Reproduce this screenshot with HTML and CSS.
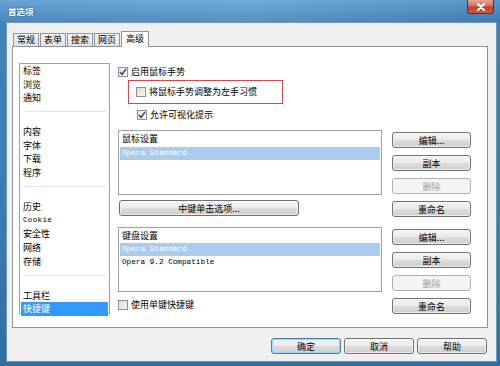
FILE: index.html
```html
<!DOCTYPE html>
<html lang="zh">
<head>
<meta charset="utf-8">
<title>首选项</title>
<link rel="stylesheet" href="styles.css">
</head>
<body>
<div class="window">
  <div class="titlebar">
    <span class="title">首选项</span>
    <span class="close"><svg width="10" height="8" viewBox="0 0 10 8"><path d="M2 1 L8 7 M8 1 L2 7" stroke="#fff" stroke-width="2" stroke-linecap="round"/></svg></span>
  </div>
  <div class="client">
    <div class="tabs">
      <div class="tab">常规</div>
      <div class="tab">表单</div>
      <div class="tab">搜索</div>
      <div class="tab">网页</div>
      <div class="tab active">高级</div>
    </div>
    <div class="panel">
      <ul class="nav">
        <li>标签</li>
        <li>浏览</li>
        <li>通知</li>
        <li class="sep"></li>
        <li>内容</li>
        <li>字体</li>
        <li>下载</li>
        <li>程序</li>
        <li class="sep"></li>
        <li>历史</li>
        <li class="mono">Cookie</li>
        <li>安全性</li>
        <li>网络</li>
        <li>存储</li>
        <li class="sep"></li>
        <li>工具栏</li>
        <li class="selected">快捷键</li>
      </ul>
      <div class="main">
        <label class="cb-row">
          <span class="cb checked"><svg width="8" height="8" viewBox="0 0 8 8"><path d="M1 4 L3 6.5 L7 1" fill="none" stroke="#2f4f8a" stroke-width="1.6"/></svg></span>
          <span>启用鼠标手势</span>
        </label>
        <div class="highlight">
          <label class="cb-row">
            <span class="cb"></span>
            <span>将鼠标手势调整为左手习惯</span>
          </label>
        </div>
        <label class="cb-row indent">
          <span class="cb checked"><svg width="8" height="8" viewBox="0 0 8 8"><path d="M1 4 L3 6.5 L7 1" fill="none" stroke="#2f4f8a" stroke-width="1.6"/></svg></span>
          <span>允许可视化提示</span>
        </label>

        <div class="group mouse">
          <div class="left">
            <div class="listbox">
              <div class="lb-head">鼠标设置</div>
              <div class="lb-row sel">Opera Standard</div>
            </div>
            <button class="btn wide">中键单击选项...</button>
          </div>
          <div class="btns">
            <button class="btn">编辑...</button>
            <button class="btn">副本</button>
            <button class="btn" disabled>删除</button>
            <button class="btn">重命名</button>
          </div>
        </div>

        <div class="group keys">
          <div class="left">
            <div class="listbox">
              <div class="lb-head">键盘设置</div>
              <div class="lb-row sel">Opera Standard</div>
              <div class="lb-row">Opera 9.2 Compatible</div>
            </div>
            <label class="cb-row single">
              <span class="cb"></span>
              <span>使用单键快捷键</span>
            </label>
          </div>
          <div class="btns">
            <button class="btn">编辑...</button>
            <button class="btn">副本</button>
            <button class="btn" disabled>删除</button>
            <button class="btn">重命名</button>
          </div>
        </div>
      </div>
    </div>
    <div class="footer">
      <button class="btn foot default">确定</button>
      <button class="btn foot">取消</button>
      <button class="btn foot">帮助</button>
    </div>
  </div>
</div>
</body>
</html>
```

FILE: styles.css
```css
* { box-sizing: border-box; }
html, body { margin: 0; padding: 0; }
body {
  width: 500px;
  height: 366px;
  overflow: hidden;
  font-family: "Noto Sans CJK SC", "Liberation Sans", sans-serif;
  font-size: 9px;
  color: #000;
}
.window {
  width: 500px;
  height: 366px;
  display: flex;
  flex-direction: column;
  background: linear-gradient(180deg, #5f9fd2 0px, #3f83bb 22px, #3a7db4 200px, #2f6fa4 366px);
}
.titlebar {
  height: 22px;
  display: flex;
  justify-content: space-between;
  align-items: flex-start;
  padding-left: 8px;
  background: linear-gradient(90deg, rgba(255,255,255,0.05), rgba(255,255,255,0.12) 50%, rgba(0,0,0,0.05));
}
.title {
  margin-top: 6px;
  font-size: 8.5px;
  font-weight: bold;
  color: #fff;
  line-height: 11px;
  text-shadow: 0 0 2px rgba(0,30,70,0.7);
}
.close {
  width: 27px;
  height: 14px;
  margin-right: 6px;
  display: flex;
  align-items: center;
  justify-content: center;
  background: linear-gradient(180deg, #e8a597 0%, #d2705d 45%, #c0412b 55%, #cc5a45 100%);
  border: 1px solid #6d2a22;
  border-top: none;
  border-radius: 0 0 3px 3px;
}
.client {
  flex: 1;
  margin: 0 3px 4px 6px;
  background: #f0f0f0;
  border: 1px solid #7395b5;
  display: flex;
  flex-direction: column;
}
.tabs {
  display: flex;
  align-items: flex-end;
  height: 23px;
  padding-left: 6px;
  position: relative;
  z-index: 1;
}
.tab {
  height: 13px;
  padding: 0 3px;
  margin-right: 1px;
  border: 1px solid #8e939b;
  border-bottom: none;
  background: linear-gradient(180deg, #f4f4f4, #e3e3e3);
  line-height: 12px;
  font-size: 9px;
}
.tab.active {
  height: 16px;
  margin-bottom: -1px;
  background: #fff;
  padding: 0 4px;
  line-height: 14px;
}
.panel {
  margin-left: 5px;
  width: 476px;
  height: 282px;
  background: #fff;
  border: 1px solid #8e939b;
  display: flex;
  align-items: flex-start;
}
.nav {
  list-style: none;
  margin: 16px 0 0 6px;
  padding: 0;
  width: 91px;
  height: 251px;
  border: 1px solid #9ba0a6;
  flex: none;
}
.nav li {
  height: 13.6px;
  line-height: 13.6px;
  padding-left: 2px;
  margin: 0 1px;
}
.nav li.mono {
  font-family: "Liberation Mono", monospace;
  font-size: 7.6px;
  letter-spacing: 0.3px;
}
.nav li.sep {
  height: 14px;
  position: relative;
}
.nav li.sep::after {
  content: "";
  display: block;
  margin: 6.5px 2px 0;
  border-top: 1px solid #e2e2e2;
}
.nav li.selected {
  background: #3399ff;
  color: #fff;
}
.main {
  margin: 19px 0 0 8px;
  display: flex;
  flex-direction: column;
  align-items: flex-start;
}
.cb-row {
  display: flex;
  align-items: center;
  height: 12px;
  gap: 3px;
  line-height: 12px;
}
.cb {
  width: 10px;
  height: 10px;
  border: 1px solid #8f8f8f;
  background: linear-gradient(135deg, #dcdcdc, #f6f6f6);
  display: flex;
  align-items: center;
  justify-content: center;
  flex: none;
}
.cb.checked { background: linear-gradient(135deg, #e6e6e6, #ffffff); }
.highlight {
  margin: 2px 0 0 10px;
  width: 155px;
  height: 24px;
  border: 1px solid #cf4b4b;
  display: flex;
  align-items: center;
  padding-left: 7px;
}
.indent { margin: 5px 0 0 19px; }
.group {
  display: grid;
  grid-template-columns: 264px 79px;
  column-gap: 10px;
  align-items: start;
}
.group.mouse { margin-top: 9px; }
.group.keys { margin-top: 10px; }
.left { display: flex; flex-direction: column; align-items: flex-start; }
.listbox {
  width: 264px;
  height: 65px;
  border: 1px solid #9ba0a6;
  background: #fff;
  padding: 1px 1px 0;
}
.lb-head {
  height: 15px;
  line-height: 14px;
  padding-left: 2px;
}
.lb-row {
  height: 13px;
  line-height: 13px;
  padding-left: 2px;
  font-family: "Liberation Mono", monospace;
  font-size: 7.7px;
}
.lb-row.sel { background: #a9cdef; color: #fff; }
.keys .lb-head { height: 14px; }
.btns {
  display: flex;
  flex-direction: column;
  gap: 7px;
  padding-top: 2px;
}
.btn {
  font-family: "Noto Sans CJK SC", "Liberation Sans", sans-serif;
  font-size: 9px;
  color: #000;
  height: 16px;
  width: 79px;
  padding: 0;
  line-height: 13px;
  border: 1px solid #707070;
  border-radius: 3px;
  background: linear-gradient(180deg, #f3f3f3 0%, #ebebeb 48%, #dddddd 52%, #cfcfcf 100%);
  box-shadow: inset 0 0 0 1px rgba(255,255,255,0.6);
}
.btn:disabled {
  color: #a0a0a0;
  border-color: #adb2b5;
  background: #f4f4f4;
  box-shadow: none;
}
.btn.wide { width: 180px; margin: 5px 0 0 1px; }
.single { margin-top: 7px; }
.footer {
  display: flex;
  justify-content: flex-end;
  gap: 3px;
  padding-right: 9px;
  margin-top: 10px;
}
.btn.foot { width: 70px; }
.btn.default {
  border-color: #3c7fb1;
  box-shadow: inset 0 0 0 1px #9fd5f5;
}
```
